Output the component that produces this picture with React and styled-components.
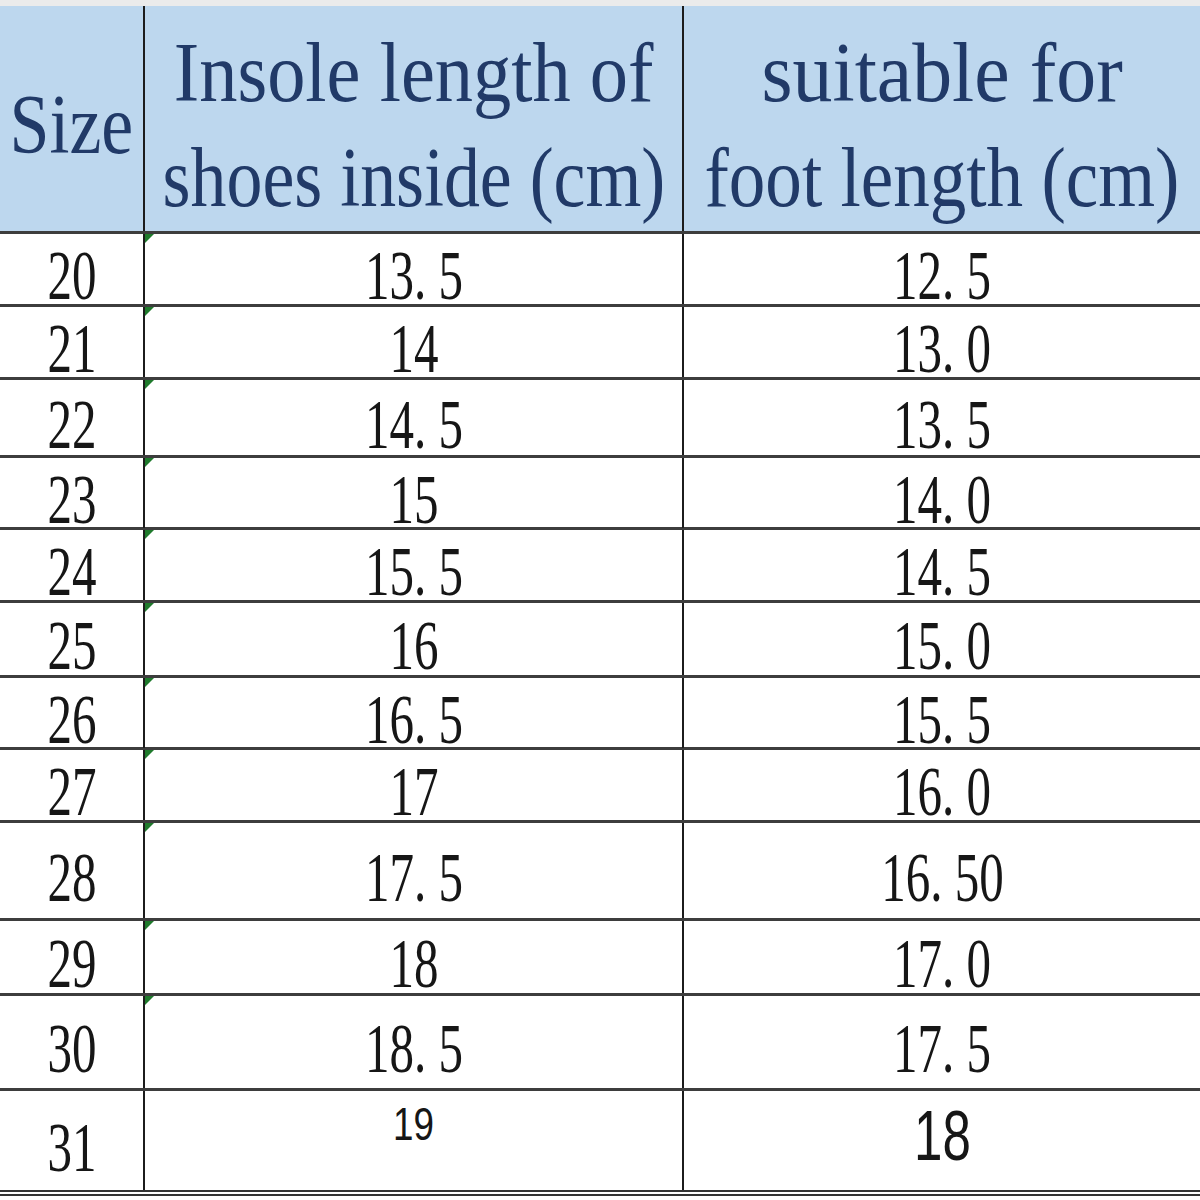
import styled, { createGlobalStyle } from "styled-components";

const GlobalStyle = createGlobalStyle`
  html, body {
    margin: 0;
    padding: 0;
    background: #ffffff;
  }
  body {
    font-family: "Liberation Serif", "Times New Roman", serif;
  }
`;

const HEADER = [
  { key: "size", lines: [{ text: "Size", squeeze: 0.855 }] },
  {
    key: "insole",
    lines: [
      { text: "Insole length of", squeeze: 0.91 },
      { text: "shoes inside (cm)", squeeze: 0.855 },
    ],
  },
  {
    key: "foot",
    lines: [
      { text: "suitable for", squeeze: 0.95 },
      { text: "foot length (cm)", squeeze: 0.87 },
    ],
  },
];

const ROWS = [
  { size: "20", insole: "13.5", foot: "12.5", height: 73 },
  { size: "21", insole: "14", foot: "13.0", height: 73 },
  { size: "22", insole: "14.5", foot: "13.5", height: 78 },
  { size: "23", insole: "15", foot: "14.0", height: 72 },
  { size: "24", insole: "15.5", foot: "14.5", height: 73 },
  { size: "25", insole: "16", foot: "15.0", height: 75 },
  { size: "26", insole: "16.5", foot: "15.5", height: 72 },
  { size: "27", insole: "17", foot: "16.0", height: 73 },
  { size: "28", insole: "17.5", foot: "16.50", height: 98 },
  { size: "29", insole: "18", foot: "17.0", height: 75 },
  { size: "30", insole: "18.5", foot: "17.5", height: 95 },
];

const Page = styled.div`
  width: 1200px;
  height: 1200px;
  overflow: hidden;
  background: #ffffff;
`;

const TopStrip = styled.div`
  height: 6px;
  background: #ebebeb;
`;

const Row = styled.div`
  display: grid;
  grid-template-columns: 143px 539px 1fr;
  box-sizing: border-box;
  height: ${(p) => p.$height}px;
  border-top: ${(p) => (p.$first ? "none" : "3px solid #3d3d3d")};
  border-bottom: ${(p) => (p.$last ? "6px double #333333" : "none")};
`;

const HeaderRow = styled(Row)`
  background: #bdd7ee;
`;

const HeaderCell = styled.div`
  box-sizing: border-box;
  display: flex;
  flex-direction: column;
  justify-content: center;
  padding-top: 12px;
  border-left: ${(p) => (p.$divider ? "2px solid #1c1c1c" : "none")};
  color: #213a68;
  font-size: 84px;
  line-height: 105px;
  white-space: nowrap;
`;

const HeaderLine = styled.div`
  margin: 0 -80px;
  text-align: center;
`;

const Squeezed = styled.span`
  display: inline-block;
  position: relative;
  top: ${(p) => p.$shift || 0}px;
  transform: scaleX(${(p) => p.$squeeze});
  transform-origin: center;
`;

const Dot = styled.span`
  padding-right: 0.25em;
`;

const Cell = styled.div`
  position: relative;
  box-sizing: border-box;
  display: flex;
  justify-content: center;
  align-items: ${(p) => (p.$top ? "flex-start" : "center")};
  padding-top: ${(p) => p.$padTop || 0}px;
  border-left: ${(p) => (p.$divider ? "2px solid #1c1c1c" : "none")};
  color: #161616;
  font-family: ${(p) =>
    p.$sans
      ? '"Liberation Sans", Arial, sans-serif'
      : '"Liberation Serif", "Times New Roman", serif'};
  font-size: ${(p) => p.$size}px;
  line-height: 1;
  white-space: nowrap;
`;

const TextFlag = styled.span`
  position: absolute;
  top: 0;
  left: 0;
  width: 0;
  height: 0;
  border-top: 9px solid #1f7a2c;
  border-right: 9px solid transparent;
`;

const withDot = (value) => {
  const [whole, frac] = value.split(".");
  if (frac === undefined) return whole;
  return (
    <>
      {whole}
      <Dot>.</Dot>
      {frac}
    </>
  );
};

const Num = ({ children, squeeze = 0.7, shift = 7 }) => (
  <Squeezed $squeeze={squeeze} $shift={shift}>
    {withDot(children)}
  </Squeezed>
);

export default function App() {
  return (
    <Page>
      <GlobalStyle />
      <TopStrip />
      <HeaderRow $height={225} $first>
        {HEADER.map((col, i) => (
          <HeaderCell key={col.key} $divider={i > 0}>
            {col.lines.map((line) => (
              <HeaderLine key={line.text}>
                <Squeezed $squeeze={line.squeeze}>{line.text}</Squeezed>
              </HeaderLine>
            ))}
          </HeaderCell>
        ))}
      </HeaderRow>

      {ROWS.map((row) => (
        <Row key={row.size} $height={row.height}>
          <Cell $size={70}>
            <Num>{row.size}</Num>
          </Cell>
          <Cell $size={70} $divider>
            <TextFlag />
            <Num>{row.insole}</Num>
          </Cell>
          <Cell $size={70} $divider>
            <Num>{row.foot}</Num>
          </Cell>
        </Row>
      ))}

      <Row $height={108} $last>
        <Cell $size={70}>
          <Num>31</Num>
        </Cell>
        <Cell $size={46} $padTop={10} $divider $sans $top>
          <Num squeeze={0.8} shift={0}>19</Num>
        </Cell>
        <Cell $size={71} $divider $sans>
          <Num squeeze={0.72} shift={-5}>18</Num>
        </Cell>
      </Row>
    </Page>
  );
}
